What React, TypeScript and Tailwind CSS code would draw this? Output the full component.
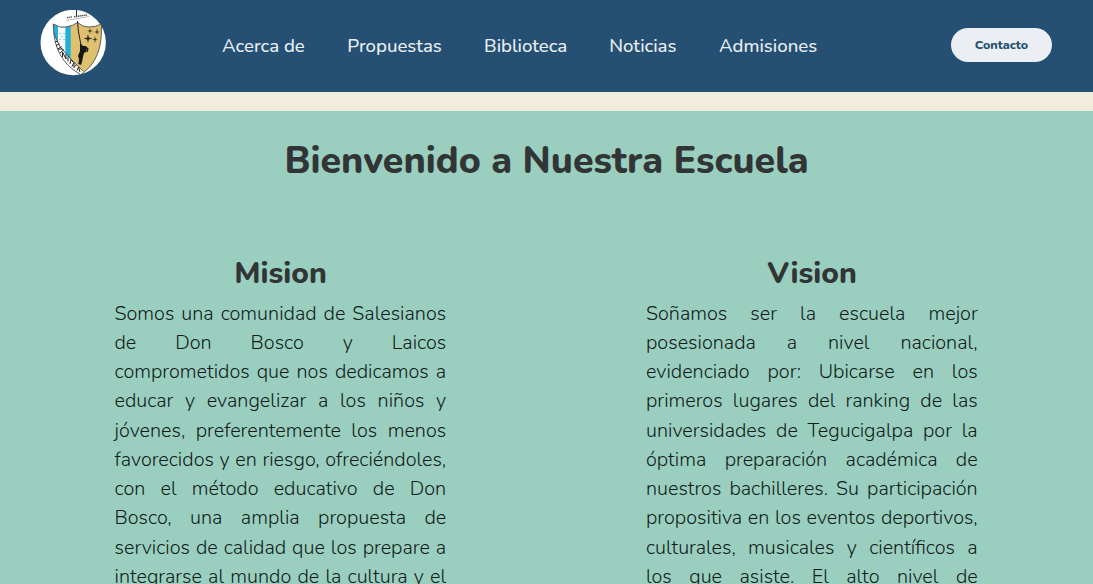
const links = [
  { label: "Acerca de", width: "w-[83px]" },
  { label: "Propuestas", width: "w-[94.500px]" },
  { label: "Biblioteca", width: "w-[83px]" },
  { label: "Noticias", width: "w-[67.500px]" },
  { label: "Admisiones", width: "w-[98px]" },
];

const mission = [
  "Somos una comunidad de Salesianos",
  "de Don Bosco y Laicos",
  "comprometidos que nos dedicamos a",
  "educar y evangelizar a los niños y",
  "jóvenes, preferentemente los menos",
  "favorecidos y en riesgo, ofreciéndoles,",
  "con el método educativo de Don",
  "Bosco, una amplia propuesta de",
  "servicios de calidad que los prepare a",
  "integrarse al mundo de la cultura y el",
];

const vision = [
  "Soñamos ser la escuela mejor",
  "posesionada a nivel nacional,",
  "evidenciado por: Ubicarse en los",
  "primeros lugares del ranking de las",
  "universidades de Tegucigalpa por la",
  "óptima preparación académica de",
  "nuestros bachilleres. Su participación",
  "propositiva en los eventos deportivos,",
  "culturales, musicales y científicos a",
  "los que asiste. El alto nivel de",
];

const shield =
  "M13.300 14Q20 18.500 26 17Q33 16 37.500 12.500Q43 17.500 49 17Q56 17 61.300 14C62.500 36 57 54 40.700 64.500C22 54 13.500 38 13.300 14Z";

function Logo() {
  return (
    <svg viewBox="0 0 66 66" className="h-[66px] w-[66px] shrink-0" aria-label="Escudo">
      <defs>
        <clipPath id="shield">
          <path d={shield} />
        </clipPath>
      </defs>
      <circle cx="33.200" cy="32.500" r="32.700" fill="#fff" />
      <g clipPath="url(#shield)">
        <path d="M30 10H65V66H30Z" fill="#dfbf70" />
        <path d="M10 10H30.700V60H10Z" fill="#20b0d8" />
        <path d="M18 10H25.300V60H18Z" fill="#fff" />
        <path d="M10 18L14 24L20 36.500L30.700 49L43 61V66H10Z" fill="#fff" />
        <path d="M13 22L20 36.500L30.700 49L43 61" fill="none" stroke="#333" strokeWidth="0.8" />
      </g>
      <path d={shield} fill="none" stroke="#4a4e45" strokeWidth="0.9" />
      <path d="M36.500 0V6M37.500 11L38.500 22L41 35" stroke="#111" strokeWidth="0.9" fill="none" />
      <path d="M26 10.500L49 6.500" stroke="#777" strokeWidth="0.5" />
      <path d="M27 7.700L32 6.900M34 6.700L47 5" stroke="#555" strokeWidth="1.400" strokeDasharray="1.5 0.5" />
      <path d="M40 33L43 36L46 36L47 39L46 42L44 43L43 47L42 52L41 55L38.500 54L39 49L38 46L40 41Z" fill="#171713" />
      <path d="M46 37L48 39L47 42M42 46L39 54" stroke="#171713" strokeWidth="1.200" fill="none" />
      <g fill="#292a20">
        <path d="M48 24L48.900 27.600L52.500 28.500L48.900 29.400L48 33L47.100 29.400L43.500 28.500L47.100 27.600Z" />
        <path d="M50 18L50.600 20.400L53 21L50.600 21.600L50 24L49.400 21.600L47 21L49.400 20.400Z" />
        <path d="M57 18L57.600 21.400L60 22L57.600 22.600L57 25L56.400 22.600L54 22L56.400 21.400Z" />
        <path d="M55 26L55.600 28.900L58 29.500L55.600 30.100L55 33L54.400 30.100L52 29.500L54.400 28.900Z" />
      </g>
      <g fill="#5fc2dc">
        <circle cx="20" cy="23.500" r="0.8" />
        <circle cx="24" cy="23.500" r="0.8" />
        <circle cx="22" cy="26.500" r="0.8" />
        <circle cx="20" cy="29.500" r="0.8" />
        <circle cx="24" cy="29.500" r="0.8" />
      </g>
      <path
        d="M15 32L18 31M16 35.500L19.500 34M18 39L21.500 36.500M18 39L22.500 39M20 43L24 39.500M22.500 47V42L26 49V44M28 51.500V46.500M30 54L31 49.500L33 52M32 56.500L34 52.500V57.500L36.500 54.500M37 60.500L38.500 57L40 62"
        fill="none"
        stroke="#222"
        strokeWidth="1"
      />
    </svg>
  );
}

function Statement({ title, lines }: { title: string; lines: string[] }) {
  return (
    <article className="w-[332px]">
      <h2 className="text-center text-[30px] font-extrabold leading-[40px] text-[#313535]">{title}</h2>
      <p className="mt-[4.6px] w-[331.7px] text-[19.8px] font-[330] leading-[29.25px] text-[#111c1a]">
        {lines.map((line) => (
          <span key={line} className="block whitespace-nowrap text-justify [text-align-last:justify]">{line}</span>
        ))}
      </p>
    </article>
  );
}

export default function App() {
  return (
    <div className="h-[584px] overflow-hidden bg-[#f0eddd] font-['Nunito','Lato',sans-serif]">
      <header className="flex h-[92px] items-center bg-[#255073] pl-10 pr-[41px]">
        <div className="-mt-[7px]"><Logo /></div>
        <nav className="ml-[116px] flex gap-[42.25px] text-[18.6px] font-medium leading-[28px] text-[#e9eef2]">
          {links.map((link) => (
            <a key={link.label} href="#" className={`${link.width} whitespace-nowrap`}>{link.label}</a>
          ))}
        </nav>
        <button className="-mt-[2px] ml-auto h-[34px] w-[101px] rounded-full bg-[#ebeff3] pt-[1px] text-[12.5px] font-extrabold text-[#255073]">Contacto</button>
      </header>
      <main className="mt-[19px] h-[473px] overflow-hidden bg-[#9acfc0] pt-[25px]">
        <h1 className="text-center text-[37.5px] font-extrabold leading-[50px] text-[#313535]">Bienvenido a Nuestra Escuela</h1>
        <section className="mt-[68px] flex justify-between pl-[114.500px] pr-[115px]">
          <Statement title="Mision" lines={mission} />
          <Statement title="Vision" lines={vision} />
        </section>
      </main>
    </div>
  );
}
